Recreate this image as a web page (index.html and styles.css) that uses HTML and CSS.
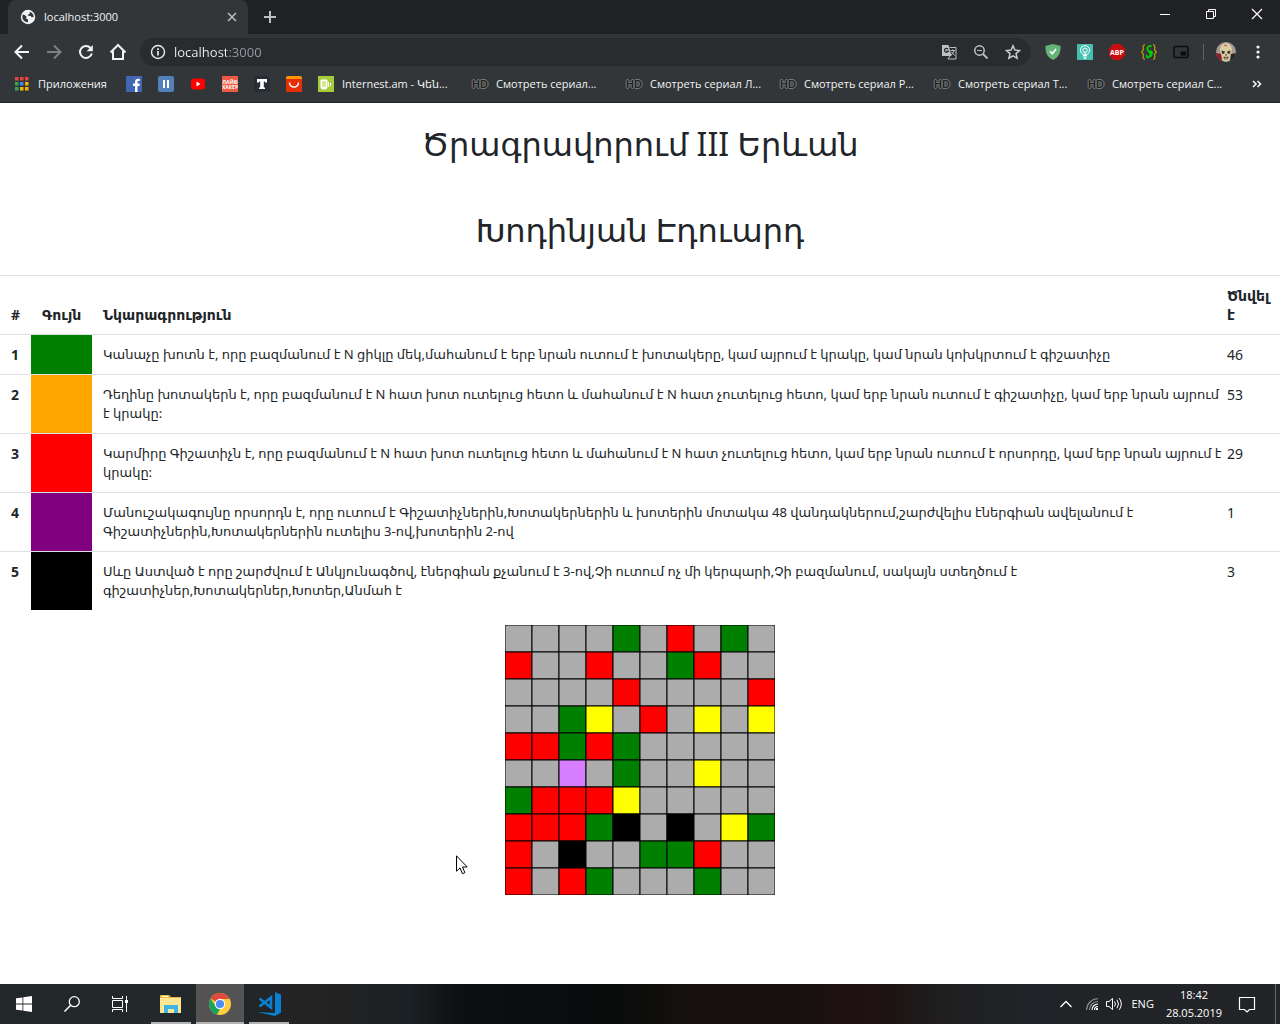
FILE: index.html
```html
<!DOCTYPE html>
<html lang="hy">
<head>
<meta charset="utf-8">
<meta name="viewport" content="width=device-width, initial-scale=1">
<title>localhost:3000</title>
<link rel="stylesheet" href="styles.css">
</head>
<body>
<header class="browser">
  <div class="tabstrip">
    <div class="tab">
      <svg class="i16" viewBox="0 0 16 16"><circle cx="8" cy="8" r="7.2" fill="#f1f3f4"/><path d="M2.6 5.6 5 6.2l1.6 1.6L6 9.400l2 1.200v2.600c-3 .3-5.300-2-5.700-4.600zM7.500 2.400l2 .2.500 1.600-1.700 1.200-.6 1.200 2.600.3 1.700 1.400 1.700-.3C13.500 5 11.500 2.200 7.500 2.400z" fill="#323639"/></svg>
      <span class="tab-title">localhost:3000</span>
      <button class="plain" aria-label="Close tab"><svg class="i10" viewBox="0 0 10 10"><path d="M1 1l8 8M9 1l-8 8" stroke="#bdc1c6" stroke-width="1.500"/></svg></button>
    </div>
    <button class="plain newtab" aria-label="New tab"><svg class="i12" viewBox="0 0 12 12"><path d="M6 0v12M0 6h12" stroke="#bdc1c6" stroke-width="2"/></svg></button>
    <div class="window-buttons">
      <button class="plain" aria-label="Minimize"><svg class="i12" viewBox="0 0 12 12"><path d="M1 6.500h10" stroke="#fff"/></svg></button>
      <button class="plain" aria-label="Restore"><svg class="i12" viewBox="0 0 12 12"><path d="M1.500 3.500h7v7h-7zM3.500 3V1.500h7v7H9" fill="none" stroke="#fff"/></svg></button>
      <button class="plain" aria-label="Close"><svg class="i12" viewBox="0 0 12 12"><path d="M1 1l10 10M11 1L1 11" stroke="#fff" stroke-width="1.200"/></svg></button>
    </div>
  </div>
  <div class="toolbar">
    <button class="plain nav" aria-label="Back"><svg class="i16" viewBox="0 0 16 16"><path d="M15 8H2M8 1.500L1.500 8 8 14.500" fill="none" stroke="#f1f3f4" stroke-width="2"/></svg></button>
    <button class="plain nav" aria-label="Forward"><svg class="i16" viewBox="0 0 16 16"><path d="M1 8h13M8 1.500L14.500 8 8 14.500" fill="none" stroke="#7d8083" stroke-width="2"/></svg></button>
    <button class="plain nav" aria-label="Reload"><svg class="i16" viewBox="0 0 16 16"><path d="M13.800 9.500A6 6 0 1 1 12.500 4" fill="none" stroke="#f1f3f4" stroke-width="2"/><path d="M14.800 1v6.200H8.600z" fill="#f1f3f4"/></svg></button>
    <button class="plain nav" aria-label="Home"><svg class="i18" viewBox="0 0 18 18"><path d="M1.500 9.500L9 2l7.500 7.500M4 8v8h10V8" fill="none" stroke="#f1f3f4" stroke-width="2"/></svg></button>
    <div class="omnibox">
      <svg class="i16" viewBox="0 0 16 16"><circle cx="8" cy="8" r="6.500" fill="none" stroke="#e8eaed" stroke-width="1.400"/><path d="M8 7v4.500M8 4.300V6" stroke="#e8eaed" stroke-width="1.700"/></svg>
      <input class="address" type="text" value="localhost:3000" aria-label="Address">
      <button class="plain" aria-label="Translate"><svg class="i16" viewBox="0 0 16 16"><path d="M1 1h6.500l3 11H1z" fill="#bdc1c6"/><path d="M8.500 3.500H15v11.500H7l2-3" fill="none" stroke="#bdc1c6"/><path d="M7 5a2 2 0 1 0 .3 2.200H5.500" fill="none" stroke="#292c2f" stroke-width="1.200"/><path d="M9.500 6.500h4.500M11.700 5.500v1M13 6.700c-.4 2-1.500 3-3 4.300M10.500 8l3 3.500" fill="none" stroke="#bdc1c6"/></svg></button>
      <button class="plain" aria-label="Zoom"><svg class="i16" viewBox="0 0 16 16"><circle cx="6.500" cy="6.500" r="4.700" fill="none" stroke="#bdc1c6" stroke-width="1.500"/><path d="M10 10l4.500 4.500" stroke="#bdc1c6" stroke-width="1.800"/><path d="M4.200 6.500h4.600" stroke="#bdc1c6"/></svg></button>
      <button class="plain" aria-label="Bookmark this page"><svg class="i16" viewBox="0 0 16 16"><path d="M8 1.800l1.900 4.300 4.600.4-3.500 3.100 1.100 4.600L8 11.800l-4.100 2.400L5 9.600 1.500 6.500l4.600-.4z" fill="none" stroke="#c8cbcf" stroke-width="1.500"/></svg></button>
    </div>
    <div class="extensions">
      <button class="plain" aria-label="Shield"><svg class="i16" viewBox="0 0 16 16"><path d="M8 0l7.600 2c0 7-1.600 11-7.600 14C2 13 .4 9 .4 2z" fill="#67b279"/><path d="M5 7.300l2.300 2.500L11 5" fill="none" stroke="#fff" stroke-width="1.600"/></svg></button>
      <button class="plain" aria-label="Lamp"><svg class="i16" viewBox="0 0 16 16"><rect width="16" height="16" rx="1" fill="#45bfae"/><circle cx="8" cy="6.200" r="4.600" fill="none" stroke="#fff"/><circle cx="8" cy="6.200" r="2.200" fill="none" stroke="#fff"/><path d="M8 8v3M6 11.500h4M6 13h4M7 14.500h2" stroke="#fff"/></svg></button>
      <button class="plain" aria-label="Ad blocker"><svg class="i16" viewBox="0 0 16 16"><path d="M4.700 0h6.600L16 4.700v6.600L11.300 16H4.700L0 11.300V4.700z" fill="#c70d0d"/><text x="8" y="10.800" text-anchor="middle" class="abp">ABP</text></svg></button>
      <button class="plain" aria-label="Styles"><svg class="i16" viewBox="0 0 16 16"><path d="M4 .8C1.500.8 2.500 4 2.300 6L.7 8l1.600 2c.2 2-.8 5.200 1.700 5.200M12 .8c2.500 0 1.500 3.200 1.700 5.200l1.600 2-1.600 2c-.2 2 .8 5.200-1.700 5.200" fill="none" stroke="#a8930d" stroke-width="1.400"/><path d="M10.500 2C7 1.500 5 4 7.500 7s3.500 4 .5 6c-2 1-3-.5-2-2M9 6.500l2 2-1 4" fill="none" stroke="#00d000" stroke-width="1.900"/></svg></button>
      <button class="plain" aria-label="Picture in picture"><svg class="i16" viewBox="0 0 16 16"><rect x="1" y="2.500" width="14" height="11" rx="1" fill="none" stroke="#0b0c0d" stroke-width="1.600"/><path d="M7.500 7.500h5.500v4H7.500z" fill="#0b0c0d"/></svg></button>
    </div>
    <button class="plain profile" aria-label="Profile"><svg class="i20" viewBox="0 0 20 20"><circle cx="10" cy="10" r="10" fill="#a59b91"/><path d="M0 11l5 1 1 7.200A10 10 0 0 1 0 11z" fill="#8c1c25"/><path d="M20 11l-5 1-1 7a10 10 0 0 0 6-8z" fill="#2a2825"/><path d="M4 8c0-9 12-9 12 0 0 2-.5 3-1.500 4l-.8 5.500C12 20 8 20 6.300 17.500L5.500 12C4.500 11 4 10 4 8z" fill="#d9cda4"/><path d="M5.500 8.500l3.500 1-1 2.500-2-.5zM14.500 8.500l-3.500 1 1 2.500 2-.5zM10 11.500l1 2H9z" fill="#3a3024"/><path d="M7 15.500h6M8.500 14.500v3M10 14.500v3.500M11.500 14.500v3" stroke="#5b4c36" stroke-width=".7"/><path d="M8 3l3 1" stroke="#c44"/></svg></button>
    <button class="plain" aria-label="Menu"><svg class="i16" viewBox="0 0 16 16" fill="#f1f3f4"><circle cx="8" cy="3" r="1.600"/><circle cx="8" cy="8" r="1.600"/><circle cx="8" cy="13" r="1.600"/></svg></button>
  </div>
  <nav class="bookmarks">
    <a class="apps" href="#"><svg class="i14" viewBox="0 0 14 14"><path d="M0 0h3.500v3.500H0zM5 0h3.500v3.500H5zM10 0h3.500v3.500H10z" fill="#e8453c"/><path d="M0 5h3.500v3.500H0zM0 10h3.500v3.500H0z" fill="#34a853"/><path d="M5 5h3.500v3.500H5z" fill="#4285f4"/><path d="M10 5h3.500v3.500H10zM5 10h3.500v3.500H5zM10 10h3.500v3.500H10z" fill="#f4b400"/></svg><span>Приложения</span></a>
    <a href="#" aria-label="Facebook"><svg class="i16" viewBox="0 0 16 16"><rect width="16" height="16" fill="#4267b2"/><path d="M9 16v-6H7V7.500h2V6c0-2.200 1.200-3.300 3.200-3.300h1.600V5h-1.200c-.9 0-1.100.4-1.100 1.200v1.300h2.300l-.3 2.500h-2v6z" fill="#fff"/></svg></a>
    <a href="#" aria-label="Pause"><svg class="i16" viewBox="0 0 16 16"><rect width="16" height="16" rx="2" fill="#5181b8"/><path d="M5 4h2v8H5zM9 4h2v8H9z" fill="#fff"/></svg></a>
    <a href="#" aria-label="YouTube"><svg class="i16" viewBox="0 0 16 16"><rect x="1" y="2.500" width="14" height="11" rx="2.500" fill="#f00"/><path d="M6.500 5.500v5l4-2.500z" fill="#fff"/></svg></a>
    <a href="#" aria-label="Лайфхакер"><svg class="i16" viewBox="0 0 16 16"><rect width="16" height="16" fill="#f15a42"/><text x="8" y="7.500" text-anchor="middle" class="life">ЛАЙФ</text><text x="8" y="12.500" text-anchor="middle" class="life">ХАКЕР</text></svg></a>
    <a href="#" aria-label="T"><svg class="i16" viewBox="0 0 16 16"><rect width="16" height="16" rx="2" fill="#272d35"/><path d="M3 3h10v3.500h-2V5.500H9.800v6H11V13H5v-1.500h1.200v-6H5v1H3z" fill="#fff"/></svg></a>
    <a href="#" aria-label="AliExpress"><svg class="i16" viewBox="0 0 16 16"><rect width="16" height="16" rx="2" fill="#ff9500"/><path d="M0 3h16v11a2 2 0 0 1-2 2H2a2 2 0 0 1-2-2z" fill="#e62e04"/><path d="M3.500 6.500c0 6 9 6 9 0" fill="none" stroke="#fff" stroke-width="1.500"/></svg></a>
    <a class="named" href="#"><svg class="i16" viewBox="0 0 16 16"><rect width="16" height="16" fill="#a4cd39"/><path d="M3 4v7a2 2 0 0 0 2 2h2a2 2 0 0 0 2-2V4zM10.500 6v5M12.500 7v3" fill="#fff" stroke="#fff"/><path d="M5 5v6M7 5v6" stroke="#a4cd39"/></svg><span>Internest.am - Կեն...</span></a>
    <a class="named" href="#"><b class="hd">HD</b><span>Смотреть сериал...</span></a>
    <a class="named" href="#"><b class="hd">HD</b><span>Смотреть сериал Л...</span></a>
    <a class="named" href="#"><b class="hd">HD</b><span>Смотреть сериал Р...</span></a>
    <a class="named" href="#"><b class="hd">HD</b><span>Смотреть сериал Т...</span></a>
    <a class="named" href="#"><b class="hd">HD</b><span>Смотреть сериал С...</span></a>
    <button class="plain more" aria-label="More bookmarks"><svg class="i10" viewBox="0 0 10 10"><path d="M1 2l3 3-3 3M5.500 2l3 3-3 3" fill="none" stroke="#f1f3f4" stroke-width="1.600"/></svg></button>
  </nav>
</header>

<main class="page">
  <h1>Ծրագրավորում III Երևան<br><br>Խոդինյան Էդուարդ</h1>
  <table class="legend">
    <thead>
      <tr><th class="num" scope="col">#</th><th class="color" scope="col">Գույն</th><th scope="col">Նկարագրություն</th><th class="born" scope="col">Ծնվել է</th></tr>
    </thead>
    <tbody>
      <tr><th scope="row">1</th><td class="green"></td><td class="about">Կանաչը խոտն է, որը բազմանում է N ցիկլը մեկ,մահանում է երբ նրան ուտում է խոտակերը, կամ այրում է կրակը, կամ նրան կոխկրտում է գիշատիչը</td><td class="born">46</td></tr>
      <tr><th scope="row">2</th><td class="orange"></td><td class="about">Դեղինը խոտակերն է, որը բազմանում է N հատ խոտ ուտելուց հետո և մահանում է N հատ չուտելուց հետո, կամ երբ նրան ուտում է գիշատիչը, կամ երբ նրան այրում է կրակը:</td><td class="born">53</td></tr>
      <tr><th scope="row">3</th><td class="red"></td><td class="about">Կարմիրը Գիշատիչն է, որը բազմանում է N հատ խոտ ուտելուց հետո և մահանում է N հատ չուտելուց հետո, կամ երբ նրան ուտում է որսորդը, կամ երբ նրան այրում է կրակը:</td><td class="born">29</td></tr>
      <tr><th scope="row">4</th><td class="purple"></td><td class="about">Մանուշակագույնը որսորդն է, որը ուտում է Գիշատիչներին,Խոտակերներին և խոտերին մոտակա 48 վանդակներում,շարժվելիս էներգիան ավելանում է Գիշատիչներին,Խոտակերներին ուտելիս 3-ով,խոտերին 2-ով</td><td class="born">1</td></tr>
      <tr><th scope="row">5</th><td class="black"></td><td class="about">Սևը Աստված է որը շարժվում է Անկյունագծով, էներգիան քչանում է 3-ով,Չի ուտում ոչ մի կերպարի,Չի բազմանում, սակայն ստեղծում է գիշատիչներ,Խոտակերներ,Խոտեր,Անմահ է</td><td class="born">3</td></tr>
    </tbody>
  </table>
  <div class="board-wrap">
    <canvas id="board" width="270" height="270"></canvas>
    <svg class="cursor" viewBox="0 0 12 20"><path d="M.5.800v15.400l3.500-3.300 2.400 5.800 2.500-1-2.400-5.700h4.700z" fill="#fff" stroke="#000"/></svg>
  </div>
</main>

<footer class="taskbar">
  <button class="plain task" aria-label="Start"><svg class="i16" viewBox="0 0 16 16" fill="#fff"><path d="M0 2.300L6.500 1.400v6.200H0zM7.300 1.300L16 0v7.600H7.300zM0 8.400h6.500v6.200L0 13.700zM7.300 8.400H16V16l-8.700-1.300z"/></svg></button>
  <button class="plain task" aria-label="Search"><svg class="i16" viewBox="0 0 16 16"><circle cx="10.300" cy="5.700" r="5" fill="none" stroke="#fff" stroke-width="1.300"/><path d="M6.700 9.300L.5 15.500" stroke="#fff" stroke-width="1.500"/></svg></button>
  <button class="plain task" aria-label="Task view"><svg class="i16" viewBox="0 0 16 16"><path d="M.5 0v2.500h10V0M.5 16v-2.500h10V16M.5 4.500h10v7H.5zM14.500 0v16" fill="none" stroke="#fff"/><path d="M13 4h3v3h-3z" fill="#fff"/></svg></button>
  <div class="running">
    <button class="plain task open" aria-label="File Explorer"><svg class="i24" viewBox="0 0 24 24"><path d="M1 3h9l2 2h10v4H1z" fill="#e8b83a"/><path d="M1 6h21v15H1z" fill="#ffe693"/><path d="M3 4h6v1H3z" fill="#fff"/><path d="M5 21v-8h14v8h-4v-4H9v4z" fill="#3fb4e8"/></svg></button>
    <button class="plain task open active" aria-label="Chrome"><svg class="i24" viewBox="0 0 24 24"><circle cx="12" cy="12" r="11" fill="#ffcd40"/><path d="M12 12L2.500 6.500A11 11 0 0 1 21.500 6.500L21.600 7H12z" fill="#dd4b3e"/><path d="M2.500 6.500L7.700 14.500 12 17l-3 5.600A11 11 0 0 1 2.500 6.500z" fill="#19a15f"/><circle cx="12" cy="12" r="5.200" fill="#fff"/><circle cx="12" cy="12" r="4.100" fill="#4c8bf5"/></svg></button>
    <button class="plain task open" aria-label="Visual Studio Code"><svg class="i24" viewBox="0 0 24 24"><path d="M18 0l6 2.500v18L18 24 0 20l18 1z" fill="#0b7fd0"/><path d="M2.500 6.500l11.500 9V5.500l-11.500 9" fill="none" stroke="#0b7fd0" stroke-width="2.600"/></svg></button>
  </div>
  <div class="tray">
    <svg class="i12" viewBox="0 0 12 12"><path d="M.5 9L6 3.500 11.500 9" fill="none" stroke="#fff" stroke-width="1.300"/></svg>
    <svg class="i12" viewBox="0 0 12 12"><path d="M.7 12A11.300 11.300 0 0 1 12 .7M3.500 12A8.500 8.500 0 0 1 12 3.500" fill="none" stroke="#999" stroke-width="1.100"/><path d="M6 12a6 6 0 0 1 6-6M8.500 12A3.500 3.500 0 0 1 12 8.500" fill="none" stroke="#fff" stroke-width="1.100"/><circle cx="11" cy="11" r="1.200" fill="#fff"/></svg>
    <svg class="i16" viewBox="0 0 16 16"><path d="M.5 5.500h2.500L6.500 2.500v11L3 10.500H.5zM8.500 5.500q2 2.500 0 5M11 3.800q3 4.200 0 8.400M13.300 2.200q4 5.800 0 11.600" fill="none" stroke="#fff"/></svg>
    <span class="lang">ENG</span>
    <time class="clock" datetime="2019-05-28T18:42">18:42<br>28.05.2019</time>
    <button class="plain" aria-label="Notifications"><svg class="i18" viewBox="0 0 18 18"><path d="M1.500 2.500h15v12h-5L9 17l-2.500-2.500h-5z" fill="none" stroke="#fff" stroke-width="1.200"/></svg></button>
  </div>
</footer>
<script src="board.js"></script>
</body>
</html>
```
FILE: styles.css
```css
* { box-sizing: border-box; }
body {
  margin: 0;
  min-height: 100vh;
  display: flex;
  flex-direction: column;
  background: #fff;
  color: #212529;
  font: 14px/19px "Noto Sans", "DejaVu Sans", sans-serif;
}
svg { display: block; flex: none; }
.i10 { width: 10px; height: 10px; }
.i12 { width: 12px; height: 12px; }
.i14 { width: 14px; height: 14px; }
.i16 { width: 16px; height: 16px; }
.i18 { width: 18px; height: 18px; }
.i20 { width: 20px; height: 20px; }
.i24 { width: 24px; height: 24px; }
.plain {
  display: flex;
  align-items: center;
  justify-content: center;
  padding: 0;
  border: 0;
  background: none;
  color: inherit;
  font: inherit;
}

/* Browser window */
.browser {
  background: #323639;
  color: #f1f3f4;
  font: 11px/16px "Open Sans", "Noto Sans", "DejaVu Sans", sans-serif;
  border-bottom: 1px solid #202124;
}
.tabstrip { display: flex; height: 34px; padding-left: 8px; background: #202124; }
.tab {
  display: flex;
  align-items: center;
  gap: 8px;
  width: 240px;
  padding: 0 11px 0 12px;
  background: #323639;
  border-radius: 8px 8px 0 0;
}
.tab-title { flex: 1; }
.newtab { width: 44px; }
.window-buttons { display: flex; margin-left: auto; height: 28px; }
.window-buttons button { width: 46px; }
.toolbar { display: flex; align-items: center; height: 36px; padding: 0 14px 0 6px; }
.nav { width: 32px; height: 28px; }
.omnibox {
  display: flex;
  align-items: center;
  gap: 16px;
  flex: 1;
  height: 28px;
  margin-left: 6px;
  padding: 0 10px;
  border-radius: 14px;
  background: #292c2f;
}
.address {
  flex: 1;
  min-width: 0;
  margin-left: -8px;
  padding: 0;
  border: 0;
  outline: 0;
  color: transparent;
  background: linear-gradient(90deg, #f1f3f4 52px, #969ba1 52px);
  -webkit-background-clip: text;
  background-clip: text;
  font: 13px/20px "Open Sans", "Noto Sans", sans-serif;
}
.extensions { display: flex; gap: 16px; padding: 0 14px; }
.profile { padding: 0 14px 0 12px; border-left: 1px solid #5f6368; height: 16px; }
.abp { font: bold 7px "Open Sans", sans-serif; fill: #fff; }
.life { font: bold 5px "Open Sans", sans-serif; fill: #fff; }
.bookmarks { display: flex; align-items: center; gap: 16px; height: 32px; padding: 0 18px 4px 15px; }
.bookmarks a { display: flex; align-items: center; gap: 8px; flex: none; color: inherit; text-decoration: none; white-space: nowrap; }
.bookmarks .named { width: 138px; }
.bookmarks .apps { width: 95px; gap: 9px; }
.hd {
  width: 16px;
  color: #232527;
  font: bold 11px/16px "Liberation Sans", sans-serif;
  text-shadow: 1px 0 #77797b, -1px 0 #77797b, 0 1px #77797b, 0 -1px #77797b;
}
.more { margin-left: auto; }

/* Page */
.page { flex: 1; padding-top: 19px; }
h1 {
  margin: 0 0 24px;
  font-size: 32px;
  font-weight: 400;
  line-height: 43px;
  text-align: center;
}
.legend { width: 100%; border-collapse: collapse; table-layout: fixed; }
.legend th, .legend td {
  padding: 10px 11px;
  border-top: 1px solid #dee2e6;
  text-align: left;
  vertical-align: top;
}
.legend thead th { vertical-align: bottom; }
.legend .about { padding-right: 0; font-size: 13px; }
.legend .born { width: 57px; padding-left: 4px; padding-right: 4px; }
.num { width: 31px; }
.color { width: 61px; }
.green { background: green; }
.orange { background: orange; }
.red { background: red; }
.purple { background: purple; }
.black { background: black; }
.board-wrap { position: relative; width: 270px; margin: 15px auto 0; }
.board-wrap canvas { display: block; }
.cursor { position: absolute; left: -49px; top: 230px; width: 12px; height: 20px; }

/* Taskbar */
.taskbar {
  display: flex;
  height: 40px;
  color: #fff;
  background: linear-gradient(90deg, #222729 0%, #22282b 16%, #242223 25%, #1b2024 32%, #0d0f10 36%, #090d0e 44%, #090b0b 48%, #16110e 54%, #16110e 62%, #1f1111 66%, #1f1213 69%, #1f1f20 74%, #202327 80%, #232427 100%);
  font: 11px/18px "Open Sans", "Noto Sans", sans-serif;
}
.task { width: 48px; height: 40px; }
.running { display: flex; gap: 1px; margin-left: 3px; }
.open { background: linear-gradient(#b4b4b4, #b4b4b4) center bottom / 40px 2px no-repeat; }
.active { background: linear-gradient(#b4b4b4, #b4b4b4) center bottom / 48px 2px no-repeat #535354; }
.tray { display: flex; align-items: center; margin: 0 4px 0 auto; padding-right: 19px; border-right: 1px solid #68696b; }
.tray svg + svg { margin-left: 14px; }
.tray svg + .i16 { margin-left: 8px; }
.lang { margin-left: 9px; }
.clock { margin: 0 16px 0 12px; text-align: center; }
```
FILE: board.js
```js
const SIDE = 27;
const COLORS = { '.': '#acacac', G: 'green', R: 'red', Y: 'yellow', P: '#d77dff', K: 'black' };
const matrix = [
  '....G.R.G.',
  'R..R..GR..',
  '....R....R',
  '..GY.R.Y.Y',
  'RRGRG.....',
  '..P.G..Y..',
  'GRRRY.....',
  'RRRGK.K.YG',
  'R.K..GGR..',
  'R.RG...G..'
];
const ctx = document.getElementById('board').getContext('2d');
matrix.forEach((row, y) => {
  [...row].forEach((cell, x) => {
    ctx.fillStyle = COLORS[cell];
    ctx.fillRect(x * SIDE, y * SIDE, SIDE, SIDE);
    ctx.strokeRect(x * SIDE, y * SIDE, SIDE, SIDE);
  });
});
```
